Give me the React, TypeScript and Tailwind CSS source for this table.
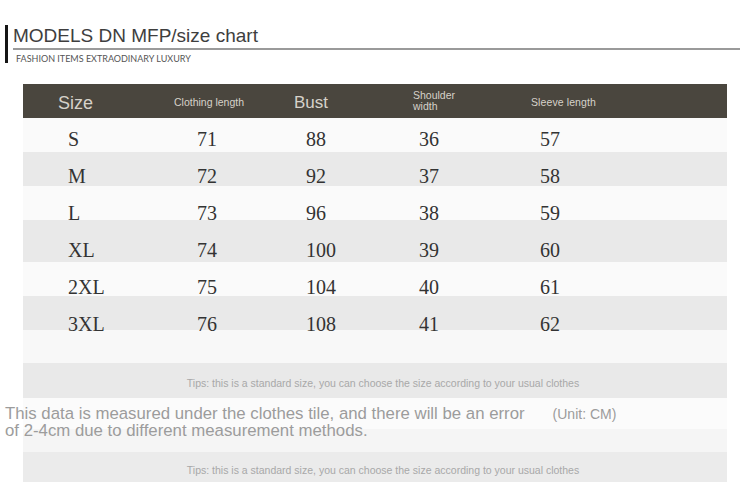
import React from "react";

const rows = [
  { size: "S", len: "71", bust: "88", sh: "36", sl: "57", h: "h-[34px]", pt: "pt-[11px]", bg: "bg-[#fafafa]" },
  { size: "M", len: "72", bust: "92", sh: "37", sl: "58", h: "h-[34px]", pt: "pt-[14px]", bg: "bg-[#e9e9e9]" },
  { size: "L", len: "73", bust: "96", sh: "38", sl: "59", h: "h-[34px]", pt: "pt-[17px]", bg: "bg-[#fafafa]" },
  { size: "XL", len: "74", bust: "100", sh: "39", sl: "60", h: "h-[42px]", pt: "pt-[20px]", bg: "bg-[#e9e9e9]" },
  { size: "2XL", len: "75", bust: "104", sh: "40", sl: "61", h: "h-[34px]", pt: "pt-[15px]", bg: "bg-[#fafafa]" },
  { size: "3XL", len: "76", bust: "108", sh: "41", sl: "62", h: "h-[34px]", pt: "pt-[18px]", bg: "bg-[#e9e9e9]" },
];

const tips = "Tips: this is a standard size, you can choose the size according to your usual clothes";

export default function App() {
  return (
    <div className="w-[750px] h-[485px] bg-white overflow-hidden font-['Liberation_Sans',Arial,sans-serif]">
      {/* Header */}
      <div className="flex pt-[25px] pl-[5px]">
        <div className="w-[3px] h-[38px] bg-[#151515]" />
        <div className="flex-1 ml-[4px] pr-[10px]">
          <div className="h-[23px] text-[19px] leading-[22px] text-[#3e3e3e] pl-[1px]">
            MODELS DN MFP/size chart
          </div>
          <div className="h-[2px] bg-[#9a9a9a] ml-[1px]" />
          <div className="pt-[4px] pl-[4px] text-[9px] leading-[10px] text-[#555] font-['Lato',sans-serif]">
            FASHION ITEMS EXTRAODINARY LUXURY
          </div>
        </div>
      </div>

      {/* Table */}
      <div className="ml-[23px] w-[704px] mt-[20px]">
        <div className="h-[34px] bg-[#4a463e] flex items-center pl-[35px] text-[#d6d2ca]">
          <div className="w-[116px] text-[18px] leading-[20px] pt-[4px]">Size</div>
          <div className="w-[120px] text-[10.5px] leading-[12px] pt-[2px]">Clothing length</div>
          <div className="w-[119px] text-[17px] leading-[20px] pt-[4px]">Bust</div>
          <div className="w-[118px] text-[10.5px] leading-[11px]">
            Shoulder
            <br />
            width
          </div>
          <div className="text-[10.5px] leading-[12px] pt-[1px] tracking-[0.1px]">Sleeve length</div>
        </div>

        {rows.map((r) => (
          <div
            key={r.size}
            className={`${r.h} ${r.pt} ${r.bg} flex pl-[45px] text-[20px] leading-[20px] text-[#333] font-['Liberation_Serif',serif]`}
          >
            <div className="w-[129px]">{r.size}</div>
            <div className="w-[109px]">{r.len}</div>
            <div className="w-[113px]">{r.bust}</div>
            <div className="w-[121px]">{r.sh}</div>
            <div>{r.sl}</div>
          </div>
        ))}

        <div className="h-[33px] bg-[#f8f8f8]" />
        <div className="h-[35px] bg-[#e9e9e9] flex items-center justify-center pl-[16px] pt-[6px] text-[10.5px] text-[#a8a8a8]">
          {tips}
        </div>
        <div className="h-[54px] bg-[linear-gradient(#fbfbfb_0,#fbfbfb_31px,#f5f5f5_31px)]">
          <div className="-ml-[18px] pt-[8px] text-[16.8px] leading-[15.5px] text-[#9c9c9c] whitespace-nowrap">
            <div className="flex items-baseline">
              <span>This data is measured under the clothes tile, and there will be an error</span>
              <span className="ml-[28px] text-[14px]">(Unit: CM)</span>
            </div>
            <div>of 2-4cm due to different measurement methods.</div>
          </div>
        </div>
        <div className="h-[30px] bg-[#ebebeb] flex items-center justify-center pl-[16px] pt-[7px] text-[10.5px] text-[#a8a8a8]">
          {tips}
        </div>
      </div>
    </div>
  );
}
